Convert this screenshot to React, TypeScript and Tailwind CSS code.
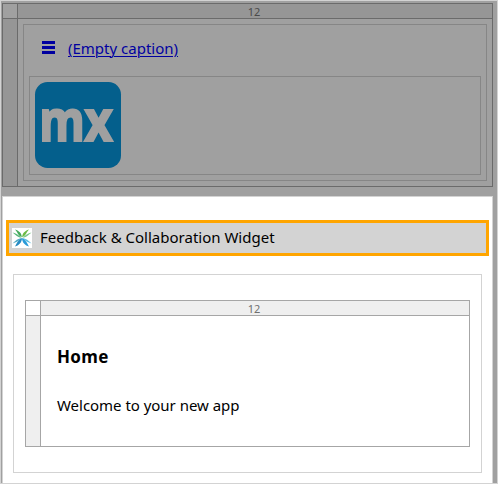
import type { ReactNode } from "react";

function MenuIcon() {
  return (
    <svg width="13" height="13" viewBox="0 0 13 13" fill="#0000a0" shapeRendering="crispEdges">
      <rect width="13" height="3" />
      <rect y="5" width="13" height="3" />
      <rect y="10" width="13" height="3" />
    </svg>
  );
}

function MxLogo() {
  return (
    <svg className="overflow-visible" width="86" height="86" viewBox="0 0 86 86">
      <rect width="86" height="86" rx="12.5" fill="#045f8c" />
      <g fill="#a0a0a0" stroke="#a0a0a0" strokeWidth="2.2" fontFamily="'Open Sans', sans-serif" fontWeight="700" fontSize="58">
        <text transform="translate(4.2 59) scale(0.8 1)">m</text>
        <text transform="translate(49.4 59) scale(0.84 1)">x</text>
      </g>
    </svg>
  );
}

function WidgetIcon() {
  return (
    <svg width="20" height="20" viewBox="0 0 20 20">
      <rect width="20" height="20" fill="#fff" />
      <path d="M3 1.500C7.500 3 9.800 5.500 9.800 9.300C6 7.500 5.500 4 3 1.500Z" fill="#43a95a" />
      <path d="M17 1.500C12.500 3 10.200 5.500 10.200 9.300C14 7.500 14.500 4 17 1.500Z" fill="#6cba45" />
      <path d="M.5 4.500C4 5.500 7 7 9.500 9.700C6 9.700 3.500 7 .5 4.500Z" fill="#58b779" />
      <path d="M19.500 4.500C16 5.500 13 7 10.500 9.700C14 9.700 16.500 7 19.500 4.500Z" fill="#7cc68a" />
      <path d="M.5 15.500C3.500 12.500 6 10.500 9.500 10C7 12.800 4 14.500 .5 15.500Z" fill="#4fa9c4" />
      <path d="M19.500 15.500C16.500 12.500 14 10.500 10.500 10C13 12.800 16 14.500 19.500 15.500Z" fill="#58bde0" />
      <path d="M3 18.500C5 15 6 12 10 10C10 14.500 6.800 17.500 3 18.500Z" fill="#268bc4" />
      <path d="M17 18.500C15 15 14 12 10 10C10 14.500 13.200 17.500 17 18.500Z" fill="#299bd9" />
    </svg>
  );
}

function LayoutGrid({ dimmed = false, children }: { dimmed?: boolean; children: ReactNode }) {
  const line = dimmed ? "border-[#6b6b6b]" : "border-[#a6a6a6]";
  const bar = dimmed ? "bg-[#969696] text-[#4b4b4b]" : "bg-[#efefef] text-[#707070]";
  return (
    <div className={`grid h-full grid-cols-[15px_1fr] grid-rows-[15px_1fr] border ${line}`}>
      <div className={`border-r border-b ${line}`} />
      <div className={`flex items-center justify-center border-b pr-[2px] text-[11px] leading-none ${line} ${bar}`}>
        12
      </div>
      <div className={`border-r ${line} ${bar}`} />
      <div>{children}</div>
    </div>
  );
}

export default function App() {
  return (
    <div className="h-[484px] w-[498px] overflow-hidden border border-[#d3d3d3] bg-[#a0a0a0] pt-0.5 pr-1 pl-px font-['Noto_Sans',sans-serif] text-black">
      <div className="h-[184px]">
        <LayoutGrid dimmed>
          <div className="mt-[5px] ml-[5px] h-[157px] w-[464px] border border-[#868686] px-[5px]">
            <div className="flex h-[51px] items-center pb-[6px] pl-[13px]">
              <MenuIcon />
              <a className="ml-[13px] text-[15px] leading-[22px] whitespace-nowrap text-[#0000a0] underline decoration-1 underline-offset-[2px]">
                (Empty caption)
              </a>
            </div>
            <div className="h-[99px] border border-[#868686] p-[5px]">
              <MxLogo />
            </div>
          </div>
        </LayoutGrid>
      </div>

      <div className="mt-[9px] h-[287px] border border-b-0 border-[#d3d3d3] bg-white pt-[23px] pl-[3px]">
        <div className="flex h-9 w-[483px] items-center border-[3px] border-[#ffa500] bg-[#d3d3d3] pl-[3px]">
          <WidgetIcon />
          <span className="mb-0.5 ml-2 text-[15px] leading-5 whitespace-nowrap">
            Feedback &amp; Collaboration Widget
          </span>
        </div>
        <div className="mt-[18px] ml-[7px] h-[199px] w-[469px] border border-[#d3d3d3] pt-[25px] pl-[11px]">
          <div className="h-[147px] w-[445px]">
            <LayoutGrid>
              <div className="pl-4">
                <h1 className="pt-[29px] text-[17px] leading-6 font-bold tracking-[0.35px]">Home</h1>
                <p className="mt-[24px] text-[15px] leading-6 tracking-[-0.03px]">Welcome to your new app</p>
              </div>
            </LayoutGrid>
          </div>
        </div>
      </div>
    </div>
  );
}
